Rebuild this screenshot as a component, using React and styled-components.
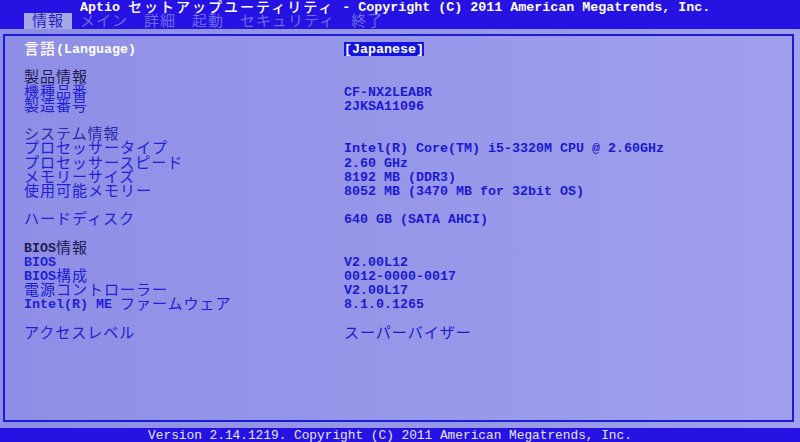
import React from 'react';
import styled, { createGlobalStyle } from 'styled-components';

const GlobalStyle = createGlobalStyle`
  html, body {
    margin: 0;
    padding: 0;
    background: #2612e2;
  }
  body {
    font-family: "Liberation Mono", "Noto Sans CJK JP", monospace;
    font-size: 13.33px;
  }
`;

// 1 cell = 8px, full width chars take 2 cells
const CJK = /([\u3000-\u30ff\u3400-\u9fff\uff00-\uffef]+)/;

const Narrow = styled.span`
  display: inline-block;
  vertical-align: top;
  height: ${({ $h }) => $h}px;
  line-height: ${({ $h }) => $h + 1}px;
`;

// CJK glyphs sit a bit lower than the mono font, so a tighter line box lifts them
const Wide = styled.span`
  display: inline-block;
  vertical-align: top;
  height: ${({ $h }) => $h}px;
  line-height: ${({ $h }) => $h - 2.2}px;
  font-family: "Noto Sans CJK JP", sans-serif;
  font-weight: ${({ $bold }) => ($bold ? 500 : 400)};
  font-size: ${({ $size }) => $size}px;
  letter-spacing: ${({ $size }) => 16 - $size}px;
`;

const grid = (text, bold, h = 14.2, size = 15) =>
  text.split(CJK).map((part, i) =>
    i % 2 ? (
      <Wide key={i} $bold={bold} $h={h} $size={size}>{part}</Wide>
    ) : part ? (
      <Narrow key={i} $h={h}>{part}</Narrow>
    ) : null
  );

const Screen = styled.div`
  width: 800px;
  height: 442px;
  display: flex;
  flex-direction: column;
  overflow: hidden;
  white-space: pre;
`;

const TopBar = styled.header`
  height: 29px;
  background: #2612e2;
  display: flex;
  flex-direction: column;
`;

const Title = styled.div`
  height: 13px;
  padding-left: 80px;
  color: #ffffff;
  font-weight: 700;
`;

const Tabs = styled.nav`
  height: 16px;
  display: flex;
  padding-left: 24px;
`;

const Tab = styled.div`
  padding: 0 8px;
  height: 16px;
  background: ${({ $active }) => ($active ? '#a6a6e6' : 'transparent')};
  color: ${({ $active }) => ($active ? '#1c1cc8' : '#6c6cf2')};
`;

const Panel = styled.main`
  flex: 1;
  min-height: 0;
  background: linear-gradient(90deg, #8e8ee6 0%, #9898ea 55%, #a0a0ee 100%);
  padding: 5px 6px 6px 3px;
  display: flex;
`;

const Frame = styled.section`
  flex: 1;
  border: 2px solid #1c1cd6;
  padding: 6px 0 0 19px;
`;

const Row = styled.div`
  display: flex;
  height: 14.2px;
`;

const Gap = styled.div`
  height: 14.2px;
`;

const Label = styled.div`
  width: 320px;
  font-weight: 700;
  color: ${({ $tone }) =>
    $tone === 'white' ? '#ffffff' : $tone === 'head' ? '#1c1a52' : $tone === 'sub' ? '#2a2aa6' : '#2020d4'};
`;

const Value = styled.div`
  font-weight: 700;
  color: #1a1ad0;
`;

const Selected = styled.span`
  background: #1414e2;
  color: #ffffff;
  font-weight: 700;
  display: inline-block;
  height: 14px;
  line-height: 15px;
`;

const BottomBar = styled.footer`
  height: 14px;
  background: #2612e2;
  display: flex;
  justify-content: center;
  padding-right: 20px;
  color: #e6e6ff;
  font-size: 12.8px;
  line-height: 15px;
`;

const tabs = ['情報', 'メイン', '詳細', '起動', 'セキュリティ', '終了'];

const rows = [
  { label: '言語(Language)', tone: 'white', selected: '[Japanese]' },
  null,
  { label: '製品情報', tone: 'head' },
  { label: '機種品番', value: 'CF-NX2LEABR' },
  { label: '製造番号', value: '2JKSA11096' },
  null,
  { label: 'システム情報', tone: 'sub' },
  { label: 'プロセッサータイプ', value: 'Intel(R) Core(TM) i5-3320M CPU @ 2.60GHz' },
  { label: 'プロセッサースピード', value: '2.60 GHz' },
  { label: 'メモリーサイズ', value: '8192 MB (DDR3)' },
  { label: '使用可能メモリー', value: '8052 MB (3470 MB for 32bit OS)' },
  null,
  { label: 'ハードディスク', value: '640 GB (SATA AHCI)' },
  null,
  { label: 'BIOS情報', tone: 'head' },
  { label: 'BIOS', value: 'V2.00L12' },
  { label: 'BIOS構成', value: '0012-0000-0017' },
  { label: '電源コントローラー', value: 'V2.00L17' },
  { label: 'Intel(R) ME ファームウェア', value: '8.1.0.1265' },
  null,
  { label: 'アクセスレベル', value: 'スーパーバイザー' },
];

export default function App() {
  return (
    <>
      <GlobalStyle />
      <Screen>
        <TopBar>
          <Title>{grid('Aptio セットアップユーティリティ - Copyright (C) 2011 American Megatrends, Inc.', true, 15.5, 14)}</Title>
          <Tabs>
            {tabs.map((t, i) => (
              <Tab key={t} $active={i === 0}>{grid(t, false, 16)}</Tab>
            ))}
          </Tabs>
        </TopBar>
        <Panel>
          <Frame>
            {rows.map((r, i) =>
              r ? (
                <Row key={i}>
                  <Label $tone={r.tone}>{grid(r.label, r.tone === 'white')}</Label>
                  {r.selected && <Selected>{r.selected}</Selected>}
                  {r.value && <Value>{grid(r.value)}</Value>}
                </Row>
              ) : (
                <Gap key={i} />
              )
            )}
          </Frame>
        </Panel>
        <BottomBar>Version 2.14.1219. Copyright (C) 2011 American Megatrends, Inc.</BottomBar>
      </Screen>
    </>
  );
}
